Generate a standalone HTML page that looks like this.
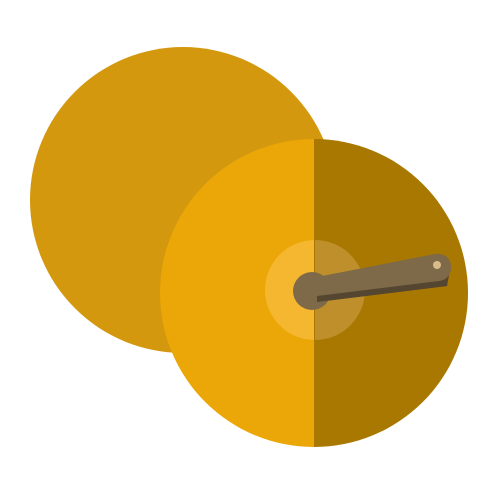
<!DOCTYPE html>
<html><head><style>html,body{margin:0;padding:0;background:#fff;width:500px;height:500px;overflow:hidden}</style></head>
<body>
<svg width="500" height="500" viewBox="0 0 500 500">
<circle cx="183" cy="200" r="153" fill="#D4980E"/>
<defs><clipPath id="c"><circle cx="314" cy="293" r="154"/></clipPath></defs>
<g clip-path="url(#c)">
<rect x="150" y="130" width="164" height="330" fill="#EBA707"/>
<rect x="314" y="130" width="170" height="330" fill="#A97800"/>
<circle cx="315" cy="290" r="50" fill="#F6B730"/>
<rect x="314" y="230" width="60" height="120" fill="#A97800"/>
<path d="M315 240 A50 50 0 0 1 315 340 Z" fill="#BE8F2A"/>
</g>
<path d="M317 302 L447 286 L450 270 L318 296 Z" fill="#544630"/>
<path d="M322 276 L435 254 Q449 253 451 265 Q452 278 440 281 L317 298 Z" fill="#7E6A48"/>
<circle cx="312" cy="291" r="19" fill="#7E6A48"/>
<path d="M317 296 L447 280 L447 286 L317 302 Z" fill="#544630"/>
<circle cx="437" cy="265" r="4" fill="#D9BC8A"/>
</svg>
</body></html>
